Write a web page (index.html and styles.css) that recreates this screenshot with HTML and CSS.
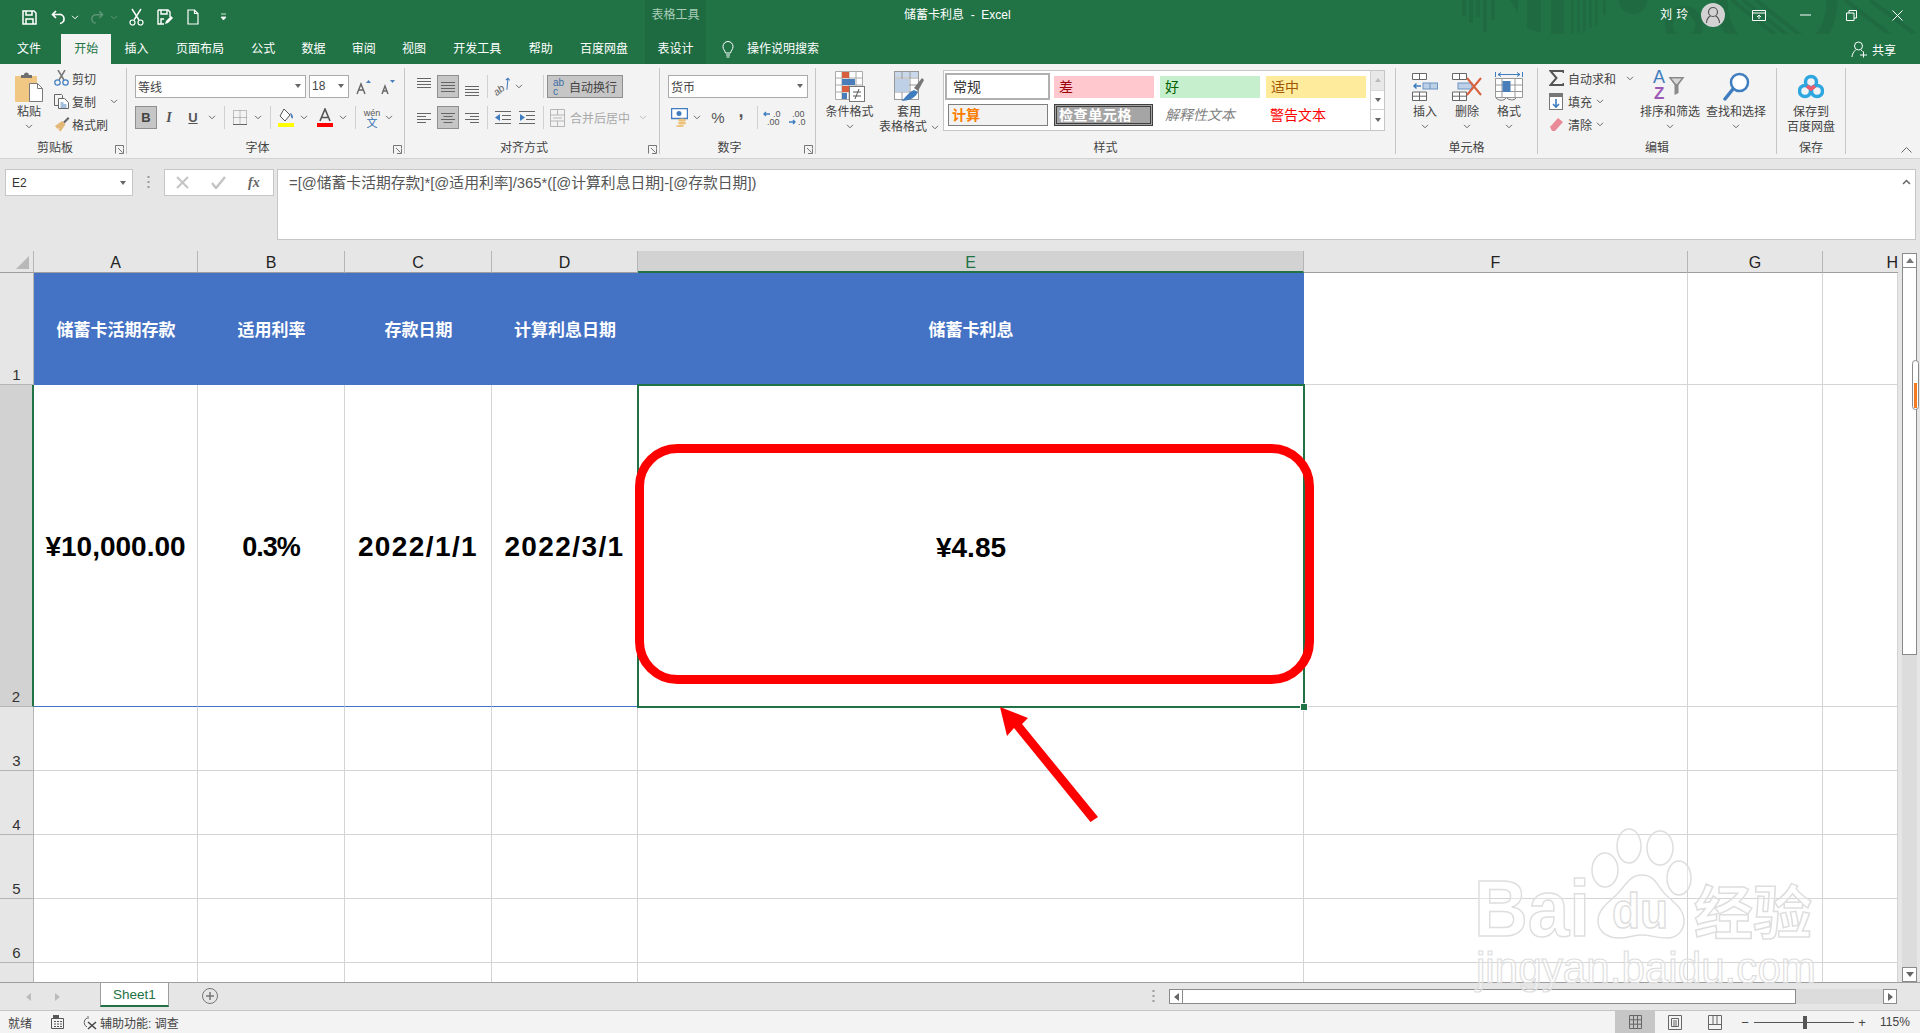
FILE: index.html
```html
<!DOCTYPE html>
<html lang="zh-CN">
<head>
<meta charset="utf-8">
<title>储蓄卡利息 - Excel</title>
<link rel="stylesheet" href="styles.css">
</head>
<body>
<svg class="defs" width="0" height="0" aria-hidden="true">
  <symbol id="chev" viewBox="0 0 8 5"><path d="M1 .8l3 3 3-3" fill="none" stroke="#6a6a6a" stroke-width="1"/></symbol>
  <symbol id="launch" viewBox="0 0 9 9"><path d="M.5 8.500v-8h8v3M3 3l4.500 4.500M4 8.500h4.500V4" fill="none" stroke="#777" stroke-width="1"/></symbol>
  <symbol id="lines" viewBox="0 0 14 10"><path d="M0 .5h14M0 3.500h14M0 6.500h14M0 9.500h14" stroke="#666" stroke-width="1"/></symbol>
</svg>
<div class="app">
  <header class="titlebar">
    <svg class="decor" width="480" height="64" viewBox="0 0 480 64" aria-hidden="true">
      <g fill="#1f6a41">
        <rect x="22" width="4" height="16"/><rect x="29" width="4" height="23"/><rect x="36" width="4" height="17"/><rect x="43" width="4" height="32"/><rect x="51" width="4" height="20"/>
        <path d="M70 0h8v13zM87 0h14v33l-14-5z"/>
        <rect x="111" width="13" height="37"/><rect x="131" width="2.500" height="35"/><rect x="137" width="2.500" height="33"/><rect x="143" width="2.500" height="31"/><rect x="149" width="2.500" height="28"/><rect x="155" width="2.500" height="25"/><rect x="163" width="2.500" height="15"/>
        <circle cx="193" cy="0" r="14"/>
      </g>
      <circle cx="244" cy="25" r="15" fill="none" stroke="#1f6a41" stroke-width="8"/>
      <path d="M282 0a55 61 0 0 0 110 0" fill="none" stroke="#1f6a41" stroke-width="11"/>
      <path d="M292 0l56 45M303 0l53 42M316 0l47 37M405 0l60 46M430 0l45 34" fill="none" stroke="#1f6a41" stroke-width="4"/>
    </svg>
    <div class="qat">
      <span class="cell w24"><svg width="15" height="15" viewBox="0 0 15 15"><path d="M1 1h11l2 2v11H1zM4 1v4h6V1M4 14V9h7v5" fill="none" stroke="#fff" stroke-width="1.500"/></svg></span>
      <span class="cell w16 ml9"><svg width="15" height="15" viewBox="0 0 15 15"><path d="M5 1L1.500 4.500 5 8M2 4.500h6a4.500 4.500 0 0 1 1 9" fill="none" stroke="#fff" stroke-width="1.700"/></svg></span>
      <span class="cell w10 ml4"><svg class="chev light" viewBox="0 0 8 5"><use href="#chev"/></svg></span>
      <span class="cell w14 ml10"><svg width="15" height="15" viewBox="0 0 15 15"><path d="M10 1l3.500 3.500L10 8M13 4.500H7a4.500 4.500 0 0 0-1 9" fill="none" stroke="#5c9476" stroke-width="1.700"/></svg></span>
      <span class="cell w10 ml5"><svg class="chev dim" viewBox="0 0 8 5"><use href="#chev"/></svg></span>
      <span class="cell w20 ml7"><svg width="15" height="18" viewBox="0 0 15 18"><path d="M3 1l7 11M12 1L5 12" stroke="#fff" stroke-width="1.400" fill="none"/><circle cx="3.500" cy="14.500" r="2.500" fill="none" stroke="#fff" stroke-width="1.200"/><circle cx="11.500" cy="14.500" r="2.500" fill="none" stroke="#fff" stroke-width="1.200"/></svg></span>
      <span class="cell w20 ml9"><svg width="16" height="16" viewBox="0 0 16 16"><path d="M1 1h10l2 2v5M1 1v14h6M4 1v4h6V1M4 15v-5h3" fill="none" stroke="#fff" stroke-width="1.400"/><path d="M8 15l1-3 5-5 2 2-5 5z" fill="#fff"/></svg></span>
      <span class="cell w20 ml8"><svg width="12" height="16" viewBox="0 0 12 16"><path d="M1 1h6.500L11 4.500V15H1zM7.500 1v3.500H11" fill="none" stroke="#fff" stroke-width="1.200"/></svg></span>
      <span class="cell w10 ml15"><svg width="7" height="8" viewBox="0 0 7 8"><path d="M1 1h5M1 4h5l-2.500 3z" fill="#fff" stroke="#fff" stroke-width=".8"/></svg></span>
    </div>
    <div class="context-head">表格工具</div>
    <div class="doc-title">储蓄卡利息&nbsp; -&nbsp; Excel</div>
    <div class="title-right">
      <span class="user">刘 玲</span>
      <span class="avatar"><svg width="16" height="18" viewBox="0 0 16 18"><circle cx="8" cy="6" r="4.500" fill="none" stroke="#555" stroke-width="1.200"/><path d="M1.500 17c0-4 2.500-6.500 4-7M14.500 17c0-4-2.500-6.500-4-7" fill="none" stroke="#555" stroke-width="1.200"/></svg></span>
      <span class="win"><svg width="14" height="11" viewBox="0 0 14 11"><path d="M.5.500h13v10H.5zM.5 3h13M7 9V5M5 7l2-2 2 2" fill="none" stroke="#fff"/></svg></span>
      <span class="win"><svg width="11" height="2" viewBox="0 0 11 2"><path d="M0 1h11" stroke="#fff"/></svg></span>
      <span class="win"><svg width="11" height="11" viewBox="0 0 11 11"><path d="M.5 3h7.500v7.500H.5zM3 3V.5h7.500V8H8" fill="none" stroke="#fff"/></svg></span>
      <span class="win"><svg width="11" height="11" viewBox="0 0 11 11"><path d="M.5.500l10 10M10.500.500l-10 10" stroke="#fff" fill="none"/></svg></span>
    </div>
  </header>

  <nav class="tabs">
    <div class="tablist">
      <span class="tab">文件</span><span class="tab active">开始</span><span class="tab">插入</span><span class="tab long">页面布局</span><span class="tab">公式</span><span class="tab">数据</span><span class="tab">审阅</span><span class="tab">视图</span><span class="tab long">开发工具</span><span class="tab">帮助</span><span class="tab long">百度网盘</span>
    </div>
    <div class="context-tab">表设计</div>
    <div class="search"><svg width="12" height="17" viewBox="0 0 12 17"><path d="M3.500 12C3 9.500 1 8.500 1 5.500a5 5 0 0 1 10 0c0 3-2 4-2.500 6.500zM4 14h4M4.500 16h3" fill="none" stroke="#fff"/></svg><span class="search-text">操作说明搜索</span></div>
    <div class="share"><svg width="17" height="17" viewBox="0 0 17 17"><circle cx="7.500" cy="5" r="4" fill="none" stroke="#fff"/><path d="M1 16c0-3 2-5.500 3.500-7M10 9l1.500 1.500M9 14h7M12.500 10.500v6" fill="none" stroke="#fff"/></svg><span>共享</span></div>
  </nav>

  <section class="ribbon">
    <div class="group g-clip">
      <div class="body row">
        <div class="big paste">
          <span class="bigicon"><svg width="28" height="30" viewBox="0 0 28 30"><rect y="4" width="22" height="26" rx="1" fill="#f0c884"/><path d="M6 6V3h3a2.500 2.500 0 0 1 5 0h3v3z" fill="#6f6f6f"/><path d="M14.500 11.500h8l5 5v13h-13z" fill="#fff" stroke="#7a7a7a"/><path d="M22.500 11.500v5h5" fill="none" stroke="#7a7a7a"/></svg></span>
          <span class="biglabel">粘贴</span>
          <span class="bigchev"><svg class="chev" viewBox="0 0 8 5"><use href="#chev"/></svg></span>
        </div>
        <div class="smalls">
          <div class="small"><span class="sicon"><svg width="15" height="16" viewBox="0 0 15 16"><path d="M4 0l6 10M11 0L5 10" stroke="#777" stroke-width="1.500" fill="none"/><circle cx="3.500" cy="12.500" r="2.700" fill="none" stroke="#3f7dbf" stroke-width="1.200"/><circle cx="11.500" cy="12.500" r="2.700" fill="none" stroke="#3f7dbf" stroke-width="1.200"/></svg></span><span>剪切</span></div>
          <div class="small"><span class="sicon"><svg width="15" height="15" viewBox="0 0 15 15"><path d="M.5.500h7l1 1v3M.5.500v11h4" fill="none" stroke="#666"/><path d="M4.500 4.500h6l4 4v6h-10z" fill="#fff" stroke="#666"/><path d="M6.500 9h3M6.500 11h6M6.500 13h6" stroke="#4a7ebb"/></svg></span><span>复制</span><svg class="chev ml14" viewBox="0 0 8 5"><use href="#chev"/></svg></div>
          <div class="small"><span class="sicon"><svg width="16" height="16" viewBox="0 0 16 16"><path d="M9 6l5-5 1.500 1.500-5 5z" fill="#666"/><path d="M1 10l7-5 3.500 3.500-5 7-2-1.500 1-2-2 1z" fill="#e3b877"/></svg></span><span>格式刷</span></div>
        </div>
      </div>
      <div class="label lab-launch">剪贴板</div>
      <svg class="launcher" viewBox="0 0 9 9"><use href="#launch"/></svg>
    </div>

    <div class="group g-font">
      <div class="body stack">
        <div class="line">
          <div class="combo w171"><span>等线</span><i class="caret"></i></div>
          <div class="combo w40 ml3"><span>18</span><i class="caret"></i></div>
          <span class="cell w24 ml2"><svg width="15" height="16" viewBox="0 0 15 16"><path d="M1 15L5 5l4 10M2.500 11h5" fill="none" stroke="#666" stroke-width="1.400"/><path d="M10 4l2.500-3L15 4z" fill="#4a7ebb"/></svg></span>
          <span class="cell w24"><svg width="15" height="16" viewBox="0 0 15 16"><path d="M2 15l3-8 3 8M3 12h4" fill="none" stroke="#666" stroke-width="1.400"/><path d="M10 1l2.500 3L15 1z" fill="#4a7ebb"/></svg></span>
        </div>
        <div class="line">
          <span class="toggle w22 bold">B</span>
          <span class="cell w24 glyph italic">I</span>
          <span class="cell w24 glyph under">U</span>
          <span class="cell w14"><svg class="chev" viewBox="0 0 8 5"><use href="#chev"/></svg></span>
          <i class="vsep ml5"></i>
          <span class="cell w26 ml2"><svg width="14" height="15" viewBox="0 0 14 15"><path d="M.5.500h13v14H.5zM7 .5v14M.5 7.500h13" fill="none" stroke="#888" stroke-dasharray="1 1"/><path d="M0 14.500h14" stroke="#666"/></svg></span>
          <span class="cell w10"><svg class="chev" viewBox="0 0 8 5"><use href="#chev"/></svg></span>
          <i class="vsep ml7"></i>
          <span class="cell w28 ml1"><svg width="16" height="19" viewBox="0 0 16 19"><path d="M6 1l6 6-5 6-5-5z" fill="#fff" stroke="#555"/><path d="M12 5c2 0 3 3 3 4.500s-2 1-2-1" fill="#4a7ebb"/><rect y="15" width="16" height="4" fill="#ff0"/></svg></span>
          <span class="cell w8"><svg class="chev" viewBox="0 0 8 5"><use href="#chev"/></svg></span>
          <span class="cell w26 ml4"><svg width="16" height="19" viewBox="0 0 16 19"><path d="M3 13L8 1l5 12M4.500 9.500h7" fill="none" stroke="#555" stroke-width="1.600"/><rect y="15" width="16" height="4" fill="#f00"/></svg></span>
          <span class="cell w10"><svg class="chev" viewBox="0 0 8 5"><use href="#chev"/></svg></span>
          <i class="vsep ml7"></i>
          <span class="cell w26 ml3 wen"><b>wén</b><b class="wen-zi">文</b></span>
          <span class="cell w8"><svg class="chev" viewBox="0 0 8 5"><use href="#chev"/></svg></span>
        </div>
      </div>
      <div class="label lab-launch">字体</div>
      <svg class="launcher" viewBox="0 0 9 9"><use href="#launch"/></svg>
    </div>

    <div class="group g-align">
      <div class="body stack">
        <div class="line">
          <span class="cell w24"><svg class="alignico top" viewBox="0 0 14 10"><use href="#lines"/></svg></span>
          <span class="toggle w22 mx1"><svg class="alignico" viewBox="0 0 14 10"><use href="#lines"/></svg></span>
          <span class="cell w24"><svg class="alignico btm" viewBox="0 0 14 10"><use href="#lines"/></svg></span>
          <i class="vsep ml3"></i>
          <span class="cell w22 ml4 orient">ab<svg width="12" height="12" viewBox="0 0 12 12"><path d="M1 11l9-9M7 2h3v3" fill="none" stroke="#4a7ebb" stroke-width="1.200"/></svg></span>
          <span class="cell w10"><svg class="chev" viewBox="0 0 8 5"><use href="#chev"/></svg></span>
          <i class="vsep ml19"></i>
          <span class="toggle wrap ml3"><span class="abc">ab<br>c</span><span class="lift">自动换行</span></span>
        </div>
        <div class="line">
          <span class="cell w24"><svg class="alignico" viewBox="0 0 14 10"><path d="M0 .5h14M0 3.500h9M0 6.500h14M0 9.500h9" stroke="#666"/></svg></span>
          <span class="toggle w22 mx1"><svg class="alignico" viewBox="0 0 14 10"><path d="M0 .5h14M2.500 3.500h9M0 6.500h14M2.500 9.500h9" stroke="#666"/></svg></span>
          <span class="cell w24"><svg class="alignico" viewBox="0 0 14 10"><path d="M0 .5h14M5 3.500h9M0 6.500h14M5 9.500h9" stroke="#666"/></svg></span>
          <i class="vsep ml3"></i>
          <span class="cell w24 ml3"><svg width="16" height="13" viewBox="0 0 16 13"><path d="M0 .5h16M7 4.500h9M7 8.500h9M0 12.500h16" stroke="#666"/><path d="M0 6.500l5-3.500v7z" fill="#3f7dbf"/></svg></span>
          <span class="cell w24"><svg width="16" height="13" viewBox="0 0 16 13"><path d="M0 .5h16M7 4.500h9M7 8.500h9M0 12.500h16" stroke="#666"/><path d="M6 6.500L1 3v7z" fill="#3f7dbf"/></svg></span>
          <i class="vsep ml4"></i>
          <span class="cell w16 ml5"><svg width="15" height="18" viewBox="0 0 15 18"><path d="M.5.500h14v17H.5zM.5 6h14M.5 12h14M7.500.5V6M7.500 12v5.500M3 9h9" fill="none" stroke="#b5b5b5"/></svg></span>
          <span class="disabled ml5 w58 lift">合并后居中</span>
          <span class="cell w10 ml10"><svg class="chev dim2" viewBox="0 0 8 5"><use href="#chev"/></svg></span>
        </div>
      </div>
      <div class="label lab-launch">对齐方式</div>
      <svg class="launcher" viewBox="0 0 9 9"><use href="#launch"/></svg>
    </div>

    <div class="group g-num">
      <div class="body stack">
        <div class="line"><div class="combo w140"><span>货币</span><i class="caret"></i></div></div>
        <div class="line">
          <span class="cell w22"><svg width="17" height="19" viewBox="0 0 17 19"><rect x=".5" y=".5" width="16" height="10" fill="#fff" stroke="#3f7dbf" stroke-width="1.500"/><circle cx="8" cy="5.500" r="2.500" fill="#3f7dbf"/><ellipse cx="11" cy="12" rx="4" ry="1.500" fill="#eec27a"/><ellipse cx="11" cy="15" rx="4" ry="1.500" fill="#eec27a"/><ellipse cx="9" cy="18" rx="4" ry="1" fill="#eec27a"/></svg></span>
          <span class="cell w14"><svg class="chev" viewBox="0 0 8 5"><use href="#chev"/></svg></span>
          <span class="cell w28 pct">%</span>
          <span class="cell w18 comma">,</span>
          <i class="vsep ml7"></i>
          <span class="cell w28 dec"><svg width="18" height="16" viewBox="0 0 18 16"><path d="M7 4H1M3 2L1 4l2 2" fill="none" stroke="#3f7dbf" stroke-width="1.300"/><text x="10" y="7" class="dectxt">.0</text><text x="4" y="15" class="dectxt">.00</text></svg></span>
          <span class="cell w22 dec"><svg width="18" height="16" viewBox="0 0 18 16"><text x="4" y="7" class="dectxt">.00</text><path d="M1 12h6M5 10l2 2-2 2" fill="none" stroke="#3f7dbf" stroke-width="1.300"/><text x="10" y="15" class="dectxt">.0</text></svg></span>
        </div>
      </div>
      <div class="label lab-launch">数字</div>
      <svg class="launcher" viewBox="0 0 9 9"><use href="#launch"/></svg>
    </div>

    <div class="group g-style">
      <div class="body row">
        <div class="big w59 ml4">
          <span class="bigicon"><svg width="30" height="31" viewBox="0 0 30 31"><path d="M.5.500h27v28H.5zM7 .5v28M14 .5v28M21 .5v28M.5 7h27M.5 14h27M.5 21h27" fill="#fff" stroke="#aaa"/><rect x="7" y="1" width="7" height="6" fill="#d9603e"/><rect x="7" y="8" width="13" height="6" fill="#4a7ebb"/><rect x="7" y="15" width="10" height="6" fill="#d9603e"/><rect x="7" y="22" width="5" height="6" fill="#4a7ebb"/><rect x="14.500" y="15.500" width="15" height="15" fill="#fff" stroke="#777"/><path d="M18 21h8M18 25h8M24 18l-4 10" stroke="#555" fill="none"/></svg></span>
          <span class="biglabel">条件格式</span>
          <span class="bigchev"><svg class="chev" viewBox="0 0 8 5"><use href="#chev"/></svg></span>
        </div>
        <div class="big w60">
          <span class="bigicon"><svg width="30" height="31" viewBox="0 0 30 31"><rect x=".5" y=".5" width="24" height="28" fill="#fff" stroke="#999"/><rect x="1" y="1" width="23" height="5" fill="#c9d8ea"/><path d="M8 .5v28M16 .5v28M.5 7h24M.5 14h24M.5 21h24" stroke="#999" fill="none"/><rect x="1" y="8" width="14" height="13" fill="#bdd0e6"/><path d="M20 17l8-10 2 2-6 11z" fill="#777"/><path d="M7 30c3-1 5-7 13-11l4 2c-2 5-8 9-17 9z" fill="#3f7dbf"/></svg></span>
          <span class="biglabel">套用</span>
          <span class="biglabel nowrap">表格格式 <svg class="chev" viewBox="0 0 8 5"><use href="#chev"/></svg></span>
        </div>
        <div class="gallery ml4">
          <div class="cstyles">
            <span class="st st-normal">常规</span>
            <span class="st st-bad">差</span>
            <span class="st st-good">好</span>
            <span class="st st-neutral">适中</span>
            <span class="st st-calc">计算</span>
            <span class="st st-check">检查单元格</span>
            <span class="st st-note">解释性文本</span>
            <span class="st st-warn">警告文本</span>
          </div>
          <div class="gal-scroll">
            <span class="gal-btn gal-off"><i class="tri-up small-tri"></i></span>
            <span class="gal-btn"><i class="tri-down small-tri"></i></span>
            <span class="gal-btn gal-more"><i class="tri-down small-tri"></i></span>
          </div>
        </div>
      </div>
      <div class="label">样式</div>
    </div>

    <div class="group g-cells">
      <div class="body row">
        <div class="big w42">
          <span class="bigicon"><svg width="26" height="28" viewBox="0 0 26 28"><path d="M.5.500h14v6H.5zM7.500.5v6M.5 19h14v8.500H.5zM.5 23.200h14M7.500 19v8.500" fill="#fff" stroke="#666"/><rect x="11" y="10" width="14.500" height="6" fill="#bdd0e6" stroke="#6a94c4"/><path d="M18 10v6" stroke="#6a94c4"/><path d="M9 13H2M4.500 10.500L2 13l2.500 2.500" fill="none" stroke="#3f7dbf" stroke-width="1.500"/></svg></span>
          <span class="biglabel">插入</span>
          <span class="bigchev"><svg class="chev" viewBox="0 0 8 5"><use href="#chev"/></svg></span>
        </div>
        <div class="big w42">
          <span class="bigicon"><svg width="30" height="28" viewBox="0 0 30 28"><path d="M.5.500h14v6H.5zM7.500.5v6M.5 19h14v8.500H.5zM.5 23.200h14M7.500 19v8.500" fill="#fff" stroke="#666"/><rect x="6" y="10" width="14" height="6" fill="#bdd0e6" stroke="#6a94c4"/><path d="M15 5l14 17M29 5L15 22" stroke="#d9603e" stroke-width="2"/></svg></span>
          <span class="biglabel">删除</span>
          <span class="bigchev"><svg class="chev" viewBox="0 0 8 5"><use href="#chev"/></svg></span>
        </div>
        <div class="big w42">
          <span class="bigicon"><svg width="28" height="31" viewBox="0 0 28 31"><path d="M.5 1v5M27.500 1v5M3 3.500h22M3 3.500l3-2M3 3.500l3 2M25 3.500l-3-2M25 3.500l-3 2" fill="none" stroke="#3f7dbf"/><path d="M.5 7.500h27v19H.5zM7 7.500v19M20 7.500v19M.5 14h27M.5 20.500h27" fill="#fff" stroke="#999"/><rect x="7.500" y="10" width="8" height="11" fill="#4a7ebb"/><path d="M1 27c3 3 8 3 10 0M12 27c2 2 7 3 9 0" fill="none" stroke="#777"/></svg></span>
          <span class="biglabel">格式</span>
          <span class="bigchev"><svg class="chev" viewBox="0 0 8 5"><use href="#chev"/></svg></span>
        </div>
      </div>
      <div class="label">单元格</div>
    </div>

    <div class="group g-edit">
      <div class="body row">
        <div class="smalls w91">
          <div class="small"><span class="sicon lefted"><svg width="15" height="16" viewBox="0 0 15 16"><path d="M14.500 3V1H1.500l6 7-6 7h13v-2" fill="none" stroke="#555" stroke-width="2"/></svg></span><span>自动求和</span><svg class="chev ml10" viewBox="0 0 8 5"><use href="#chev"/></svg></div>
          <div class="small"><span class="sicon lefted"><svg width="14" height="17" viewBox="0 0 14 17"><rect x=".5" y=".5" width="13" height="16" fill="#fff" stroke="#777"/><rect x="1" y="1" width="12" height="3" fill="#777"/><path d="M7 6v8M4 11l3 3 3-3" fill="none" stroke="#3f7dbf" stroke-width="1.600"/></svg></span><span>填充</span><svg class="chev ml4" viewBox="0 0 8 5"><use href="#chev"/></svg></div>
          <div class="small"><span class="sicon lefted"><svg width="14" height="15" viewBox="0 0 14 15"><path d="M1 10l8-9 5 4-8 9H3z" fill="#e98a98"/></svg></span><span>清除</span><svg class="chev ml4" viewBox="0 0 8 5"><use href="#chev"/></svg></div>
        </div>
        <div class="big w60">
          <span class="bigicon sortico"><b class="az-a">A</b><b class="az-z">Z</b><svg class="funnel" width="17" height="18" viewBox="0 0 16 18"><path d="M0 0h16L10 8v8l-4 2V8z" fill="#8a8a8a"/><path d="M3 1.500h10L8.500 7h-1z" fill="#d8d8d8"/></svg></span>
          <span class="biglabel nowrap">排序和筛选</span>
          <span class="bigchev"><svg class="chev" viewBox="0 0 8 5"><use href="#chev"/></svg></span>
        </div>
        <div class="big w60 ml6">
          <span class="bigicon"><svg width="27" height="29" viewBox="0 0 27 29"><circle cx="16.500" cy="10.500" r="8.500" fill="#fff" stroke="#3f7dbf" stroke-width="2.500"/><path d="M10 17L2 27" stroke="#3f7dbf" stroke-width="3.500" stroke-linecap="round"/></svg></span>
          <span class="biglabel nowrap">查找和选择</span>
          <span class="bigchev"><svg class="chev" viewBox="0 0 8 5"><use href="#chev"/></svg></span>
        </div>
      </div>
      <div class="label">编辑</div>
    </div>

    <div class="group g-save">
      <div class="body">
        <div class="big">
          <span class="bigicon"><svg width="26" height="26" viewBox="0 0 26 26"><circle cx="13" cy="8" r="5.500" fill="none" stroke="#2ea7e0" stroke-width="3.500"/><circle cx="7" cy="17" r="5.500" fill="none" stroke="#2ea7e0" stroke-width="3.500"/><circle cx="19" cy="17" r="5.500" fill="none" stroke="#2ea7e0" stroke-width="3.500"/><path d="M9 12l4 3 4-3" fill="none" stroke="#ef5b6e" stroke-width="3.500"/></svg></span>
          <span class="biglabel nowrap">保存到</span>
          <span class="biglabel nowrap">百度网盘</span>
        </div>
      </div>
      <div class="label">保存</div>
    </div>
    <svg class="collapse" width="11" height="6" viewBox="0 0 11 6"><path d="M.5 5.500l5-5 5 5" fill="none" stroke="#666"/></svg>
  </section>

  <section class="formula">
    <div class="namebox"><span>E2</span><i class="caret"></i></div>
    <svg class="dots" width="3" height="13" viewBox="0 0 3 13"><path d="M1.500 0v2M1.500 5v2M1.500 10v2" stroke="#999" stroke-width="2"/></svg>
    <div class="fxbox">
      <svg width="13" height="13" viewBox="0 0 13 13"><path d="M1 1l11 11M12 1L1 12" stroke="#c4c4c4" stroke-width="2"/></svg>
      <svg width="15" height="13" viewBox="0 0 15 13"><path d="M1 7l4 5L14 1" fill="none" stroke="#c4c4c4" stroke-width="2.500"/></svg>
      <em class="fx">fx</em>
    </div>
    <div class="fxinput"><span>=[@储蓄卡活期存款]*[@适用利率]/365*([@计算利息日期]-[@存款日期])</span><svg class="fxup" width="9" height="6" viewBox="0 0 9 6"><path d="M1 5l3.500-3.500L8 5" fill="none" stroke="#666" stroke-width="1.500"/></svg></div>
  </section>

  <main class="sheetwrap">
    <div class="sheet">
      <div class="ch corner"><i class="corner-tri"></i></div>
      <div class="ch">A</div><div class="ch">B</div><div class="ch">C</div><div class="ch">D</div><div class="ch ch-sel">E</div><div class="ch">F</div><div class="ch">G</div><div class="ch ch-h">H</div>

      <div class="rh">1</div>
      <div class="hcell">储蓄卡活期存款</div><div class="hcell">适用利率</div><div class="hcell">存款日期</div><div class="hcell">计算利息日期</div><div class="hcell">储蓄卡利息</div>
      <div class="c"></div><div class="c"></div><div class="c"></div>

      <div class="rh rh-sel">2</div>
      <div class="vcell">¥10,000.00</div><div class="vcell v-pct">0.3%</div><div class="vcell v-date">2022/1/1</div><div class="vcell v-date">2022/3/1</div>
      <div class="vcell ecell">¥4.85<i class="handle"></i></div>
      <div class="c"></div><div class="c"></div><div class="c"></div>

      <div class="rh">3</div><div class="c"></div><div class="c"></div><div class="c"></div><div class="c"></div><div class="c"></div><div class="c"></div><div class="c"></div><div class="c"></div>
      <div class="rh">4</div><div class="c"></div><div class="c"></div><div class="c"></div><div class="c"></div><div class="c"></div><div class="c"></div><div class="c"></div><div class="c"></div>
      <div class="rh">5</div><div class="c"></div><div class="c"></div><div class="c"></div><div class="c"></div><div class="c"></div><div class="c"></div><div class="c"></div><div class="c"></div>
      <div class="rh">6</div><div class="c"></div><div class="c"></div><div class="c"></div><div class="c"></div><div class="c"></div><div class="c"></div><div class="c"></div><div class="c"></div>
      <div class="rh last"></div><div class="c last"></div><div class="c last"></div><div class="c last"></div><div class="c last"></div><div class="c last"></div><div class="c last"></div><div class="c last"></div><div class="c last"></div>
    </div>
    <div class="vscroll">
      <span class="vbtn"><i class="tri-up"></i></span>
      <span class="vthumb"></span>
      <span class="vtrack"></span>
      <span class="vbtn"><i class="tri-down"></i></span>
      <span class="minimark"><i></i></span>
    </div>
  </main>

  <section class="sheetbar">
    <div class="navarrows"><i class="tri-left"></i><i class="tri-right"></i></div>
    <div class="sheettab">Sheet1</div>
    <svg class="addsheet" width="16" height="16" viewBox="0 0 16 16"><circle cx="8" cy="8" r="7.500" fill="none" stroke="#777"/><path d="M8 4v8M4 8h8" stroke="#777" stroke-width="1.500"/></svg>
    <div class="hscroll">
      <svg class="dots" width="3" height="13" viewBox="0 0 3 13"><path d="M1.500 0v2M1.500 5v2M1.500 10v2" stroke="#999" stroke-width="2"/></svg>
      <span class="hbtn"><i class="tri-left dark"></i></span>
      <span class="hthumb"></span>
      <span class="htrack"></span>
      <span class="hbtn"><i class="tri-right dark"></i></span>
    </div>
  </section>

  <footer class="status">
    <span>就绪</span>
    <svg class="st-macro" width="13" height="14" viewBox="0 0 13 14"><path d="M.5 3.500h12v10H.5zM3 6.500h2M6 6.500h2M9 6.500h2M3 9h2M6 9h2M9 9h2M3 11.500h2M6 11.500h2M9 11.500h2" fill="none" stroke="#555"/><rect x="2" width="6" height="4" fill="#555"/></svg>
    <svg class="st-acc" width="16" height="15" viewBox="0 0 16 15"><path d="M6 1v3M5 3a5 5 0 0 0 0 9" fill="none" stroke="#666"/><path d="M6 7l8 7M14 7l-8 7" stroke="#444" stroke-width="1.500"/></svg>
    <span class="st-acc-text">辅助功能: 调查</span>
    <div class="st-right">
      <span class="view on"><svg width="13" height="14" viewBox="0 0 13 14"><path d="M.5.500h12v13H.5zM4.500.5v13M8.500.5v13M.5 4.800h12M.5 9.200h12" fill="none" stroke="#666"/></svg></span>
      <span class="view"><svg width="14" height="15" viewBox="0 0 14 15"><path d="M.5.500h13v14H.5z" fill="none" stroke="#666"/><path d="M3.500 3.500h7v8h-7zM5 6h4M5 8h4M5 10h4" fill="none" stroke="#666"/></svg></span>
      <span class="view"><svg width="14" height="15" viewBox="0 0 14 15"><path d="M.5.500h13v14H.5zM.5 9.500h13M5 .5v9M9 .5v9" fill="none" stroke="#666"/></svg></span>
      <span class="zbtn ml4">−</span>
      <span class="slider"><i></i></span>
      <span class="zbtn ml2">+</span>
      <span class="zoomtxt">115%</span>
    </div>
  </footer>

  <svg class="overlay" width="1920" height="1033" viewBox="0 0 1920 1033" aria-hidden="true">
    <rect x="639.500" y="448.500" width="670" height="231" rx="38" ry="38" fill="none" stroke="#ff0000" stroke-width="9"/>
    <path d="M1000 707l28 11-6 6 76 93-7.500 5-76.500-94-7 8z" fill="#ff0000"/>
    <g class="wm">
      <ellipse cx="1605" cy="870" rx="13" ry="17"/>
      <ellipse cx="1629" cy="846" rx="12" ry="17"/>
      <ellipse cx="1660" cy="848" rx="13" ry="17"/>
      <ellipse cx="1679" cy="878" rx="12" ry="17"/>
      <path d="M1642 875c-14 0-17 13-28 22-9 8-16 14-16 24 0 11 10 17 21 17 9 0 15-3 23-3s15 3 25 3c10 0 17-7 17-17 0-11-8-17-17-25-10-9-11-21-25-21z"/>
      <text x="1474" y="936" class="wm-bai" textLength="116" lengthAdjust="spacingAndGlyphs">Bai</text>
      <text x="1612" y="928" class="wm-du" textLength="56" lengthAdjust="spacingAndGlyphs">du</text>
      <text x="1694" y="934" class="wm-cn" textLength="118" lengthAdjust="spacingAndGlyphs">经验</text>
      <text x="1476" y="983" class="wm-url" textLength="340" lengthAdjust="spacingAndGlyphs">jingyan.baidu.com</text>
    </g>
  </svg>
</div>
</body>
</html>
```
FILE: styles.css
```css
* { box-sizing: border-box; }
html, body { margin: 0; padding: 0; height: 100%; overflow: hidden; }
body {
  font-family: "Liberation Sans", "Noto Sans CJK SC", sans-serif;
  font-size: 12px;
  color: #444;
  background: #fff;
}
i { font-style: normal; display: block; }
.defs { position: absolute; }
.app { position: relative; width: 1920px; height: 1033px; display: flex; flex-direction: column; overflow: hidden; }

/* utility widths and margins */
.w8 { width: 8px; } .w10 { width: 10px; } .w14 { width: 14px; } .w16 { width: 16px; } .w18 { width: 18px; }
.w20 { width: 20px; } .w22 { width: 22px; } .w24 { width: 24px; } .w26 { width: 26px; } .w28 { width: 28px; }
.w40 { width: 40px; } .w42 { width: 42px; } .w58 { width: 58px; } .w59 { width: 59px; } .w60 { width: 60px; }
.w91 { width: 91px; } .w140 { width: 140px; } .w171 { width: 171px; }
.ml1 { margin-left: 1px; } .ml2 { margin-left: 2px; } .ml3 { margin-left: 3px; } .ml4 { margin-left: 4px; }
.ml5 { margin-left: 5px; } .ml6 { margin-left: 6px; } .ml7 { margin-left: 7px; } .ml8 { margin-left: 8px; }
.ml9 { margin-left: 9px; } .ml10 { margin-left: 10px; } .ml14 { margin-left: 14px; } .ml15 { margin-left: 15px; }
.ml19 { margin-left: 19px; } .mx1 { margin: 0 1px; }

.cell { display: flex; align-items: center; justify-content: center; height: 100%; flex: none; }
.chev { width: 8px; height: 5px; flex: none; }
.chev.light { filter: brightness(3.500); }
.chev.dim { opacity: .35; filter: brightness(2); }
.chev.dim2 { opacity: .4; }
.lift { padding-bottom: 1px; }

/* title bar */
.titlebar { position: relative; height: 34px; background: #217346; color: #fff; display: flex; flex: none; }
.decor { position: absolute; left: 1440px; top: 0; }
.qat { position: relative; width: 645px; padding-left: 17px; display: flex; align-items: center; height: 34px; }
.context-head { position: relative; width: 61px; background: #1e6b41; color: #a9cdb8; text-align: center; line-height: 31px; }
.doc-title { position: relative; margin-left: 198px; width: 130px; line-height: 30px; white-space: nowrap; color: #fff; }
.title-right { position: relative; margin-left: auto; display: flex; align-items: flex-start; height: 34px; }
.user { width: 30px; margin-left: -2px; line-height: 30px; white-space: nowrap; letter-spacing: .5px; }
.avatar { width: 24px; height: 24px; margin: 3px 0 0 11px; border-radius: 50%; background: #d2d2d2; display: flex; align-items: center; justify-content: center; }
.win { width: 46px; height: 30px; display: flex; align-items: center; justify-content: center; }
.avatar + .win { margin-left: 11px; }

/* tabs */
.tabs { position: relative; height: 30px; background: #217346; color: #fff; display: flex; flex: none; }
.tablist { width: 645px; padding-left: 4px; display: flex; gap: .3px; }
.tab { width: 50px; line-height: 30px; text-align: center; flex: none; }
.tab.long { width: 76px; }
.tab.active { width: 50px; margin-left: 7px; background: #f3f3f3; color: #217346; }
.context-tab { width: 61px; background: #1e6b41; text-align: center; line-height: 30px; }
.search { margin-left: 16px; display: flex; align-items: center; height: 30px; }
.search-text { margin-left: 13px; line-height: 30px; height: 30px; display: block; }
.share { margin-left: auto; padding-right: 24px; display: flex; align-items: center; gap: 4px; }

/* ribbon */
.ribbon { position: relative; height: 95px; background: #f3f3f3; border-bottom: 1px solid #d2d2d2; display: flex; flex: none; }
.group { position: relative; margin-top: 4px; height: 86px; border-right: 1px solid #c6c6c6; display: flex; flex-direction: column; flex: none; }
.g-clip { width: 127px; }
.g-font { width: 278px; }
.g-align { width: 255px; }
.g-num { width: 156px; }
.g-style { width: 580px; }
.g-cells { width: 142px; }
.g-edit { width: 239px; }
.g-save { width: 69px; }
.body { height: 71px; flex: none; }
.g-font .body, .g-num .body, .g-cells .body { padding-left: 8px; }
.g-align .body { padding-left: 7px; }
.g-edit .body { padding-left: 11px; }
.body.row { display: flex; }
.body.stack { padding-top: 7px; display: flex; flex-direction: column; gap: 8px; }
.line { display: flex; height: 23px; align-items: center; }
.label { height: 15px; line-height: 15px; margin-top: 2px; text-align: center; white-space: nowrap; }
.lab-launch { padding-right: 16px; }
.launcher { position: absolute; right: 2px; bottom: 0; width: 9px; height: 9px; }
.collapse { position: absolute; right: 8px; bottom: 5px; }

.big { display: flex; flex-direction: column; align-items: center; flex: none; }
.paste { width: 58px; }
.bigicon { height: 37px; display: flex; align-items: center; justify-content: center; flex: none; }
.biglabel { line-height: 15px; height: 15px; white-space: nowrap; text-align: center; }
.nowrap { display: flex; align-items: center; gap: 4px; }
.bigchev { height: 13px; display: flex; align-items: center; }

.smalls { display: flex; flex-direction: column; gap: 1px; margin-top: -1px; flex: none; }
.small { height: 22px; display: flex; align-items: center; white-space: nowrap; }
.sicon { width: 18px; display: flex; justify-content: flex-start; flex: none; }
.sicon.lefted { width: 19px; }
.paste + .smalls { margin-left: -4px; }

.combo { height: 23px; background: #fff; border: 1px solid #ababab; display: flex; align-items: center; justify-content: space-between; padding: 0 4px 1px 2px; flex: none; }
.caret { width: 0; height: 0; border-left: 3.500px solid transparent; border-right: 3.500px solid transparent; border-top: 4px solid #666; }
.toggle { height: 23px; display: flex; align-items: center; justify-content: center; background: #c6c6c6; border: 1px solid #8f8f8f; flex: none; }
.bold { font-weight: 700; font-size: 13px; color: #444; }
.glyph { font-size: 14px; color: #555; font-family: "Liberation Serif", serif; font-weight: 700; }
.italic { font-style: italic; }
.under { text-decoration: underline; font-family: "Liberation Sans", sans-serif; font-size: 13px; }
.vsep { width: 1px; height: 23px; background: #d0d0d0; flex: none; }
.wen { flex-direction: column; font-size: 9px; line-height: 10px; color: #555; }
.wen b { font-weight: 400; }
.wen-zi { color: #2f6fb0; font-size: 11px; }
.alignico { width: 14px; height: 10px; }
.alignico.top { margin-bottom: 8px; }
.alignico.btm { margin-top: 8px; }
.orient { color: #555; font-size: 10px; transform: rotate(-40deg); font-style: italic; }
.wrap { width: 76px; gap: 5px; }
.abc { font-size: 10px; line-height: 9px; color: #3f6ea5; }
.disabled { color: #a9a9a9; white-space: nowrap; flex: none; }
.pct { font-size: 15px; color: #555; }
.comma { font-size: 18px; font-weight: 700; color: #555; padding-bottom: 12px; }
.dectxt { font-size: 9px; fill: #555; }

.gallery { width: 442px; height: 61px; margin-top: 2px; background: #fff; border: 1px solid #c6c6c6; display: flex; flex: none; }
.cstyles { width: 426px; padding: 2px 0 0 1px; display: grid; grid-template-columns: 109px 106px 106px 100px; grid-template-rows: 27px 22px; row-gap: 4px; align-items: center; }
.st { display: flex; align-items: center; height: 22px; width: 100px; padding: 0 0 2px 5px; font-size: 14px; white-space: nowrap; }
.st-normal { height: 27px; width: 105px; padding-left: 6px; background: #fff; border: 2px solid #b0b0b0; color: #333; }
.st-bad { background: #ffc7ce; color: #9c0006; }
.st-good { background: #c6efce; color: #006100; }
.st-neutral { background: #ffeb9c; color: #9c5700; }
.st-calc { margin-left: 3px; background: #f2f2f2; border: 1px solid #7f7f7f; color: #fa7d00; font-weight: 700; padding-left: 3px; }
.st-check { width: 99px; background: #a5a5a5; border: 3px double #3f3f3f; color: #fff; font-weight: 700; padding-left: 2px; letter-spacing: .6px; }
.st-note { color: #7f7f7f; font-style: italic; }
.st-warn { color: #ff0000; padding-left: 4px; }
.gal-scroll { width: 14px; border-left: 1px solid #d0d0d0; display: flex; flex-direction: column; flex: none; }
.gal-btn { height: 20px; border-bottom: 1px solid #d0d0d0; display: flex; align-items: center; justify-content: center; }
.gal-off { background: #e3e3e3; opacity: .8; }
.gal-more { border-bottom: 0; }
.tri-up { width: 0; height: 0; border-left: 4px solid transparent; border-right: 4px solid transparent; border-bottom: 5px solid #777; }
.tri-down { width: 0; height: 0; border-left: 4px solid transparent; border-right: 4px solid transparent; border-top: 5px solid #666; }
.small-tri { border-left-width: 3px; border-right-width: 3px; border-top-width: 4px; border-bottom-width: 4px; }
.tri-up.small-tri { border-top-width: 0; border-bottom-color: #aaa; }
.tri-down.small-tri { border-bottom-width: 0; }
.tri-left { width: 0; height: 0; border-top: 4px solid transparent; border-bottom: 4px solid transparent; border-right: 5px solid #bbb; }
.tri-right { width: 0; height: 0; border-top: 4px solid transparent; border-bottom: 4px solid transparent; border-left: 5px solid #bbb; }
.tri-left.dark { border-right-color: #666; }
.tri-right.dark { border-left-color: #666; }

.sortico { position: relative; width: 40px; }
.az-a { position: absolute; left: 3px; top: 1px; font-size: 18px; line-height: 17px; font-weight: 400; color: #3f7dbf; }
.az-z { position: absolute; left: 4px; top: 17px; font-size: 17px; line-height: 17px; color: #9b59b6; }
.funnel { position: absolute; left: 18px; top: 9px; }

/* formula bar */
.formula { height: 92px; background: #e6e6e6; padding-top: 10px; display: flex; align-items: flex-start; flex: none; }
.namebox { margin-left: 5px; width: 128px; height: 27px; background: #fff; border: 1px solid #c6c6c6; display: flex; align-items: center; justify-content: space-between; padding: 0 6px 0 6px; font-size: 12px; color: #333; }
.formula .dots { margin: 7px 0 0 14px; }
.fxbox { margin-left: 14px; width: 110px; height: 27px; background: #fff; border: 1px solid #c6c6c6; display: flex; align-items: center; gap: 22px; padding-left: 11px; }
.fx { font-family: "Liberation Serif", serif; font-weight: 700; font-size: 14px; color: #666; }
.fxinput { position: relative; margin-left: 3px; width: 1639px; height: 71px; background: #fff; border: 1px solid #c6c6c6; padding: 4px 0 0 11px; font-size: 14.800px; line-height: 19px; color: #555; white-space: nowrap; }
.fxup { position: absolute; right: 4px; top: 9px; }

/* sheet */
.sheetwrap { display: flex; height: 731px; background: #e6e6e6; flex: none; }
.sheet {
  width: 1898px; height: 731px; background: #fff;
  display: grid;
  grid-template-columns: 34px 164px 147px 147px 146px 666px 384px 135px 75px;
  grid-template-rows: 22px 112px 322px 64px 64px 64px 64px 19px;
}
.ch { background: #e6e6e6; border-right: 1px solid #b5b5b5; border-bottom: 1px solid #9e9e9e; text-align: center; font-size: 16px; line-height: 23px; color: #222; }
.corner { position: relative; }
.corner-tri { position: absolute; right: 4px; bottom: 3px; width: 0; height: 0; border-left: 13px solid transparent; border-bottom: 13px solid #b8b8b8; }
.ch-sel { background: #d2d2d2; color: #217346; border-bottom: 2px solid #217346; }
.ch-h { text-align: right; padding-right: 0; border-right: 0; }
.rh { background: #e6e6e6; border-right: 1px solid #b5b5b5; border-bottom: 1px solid #b5b5b5; display: flex; align-items: flex-end; justify-content: center; font-size: 15px; line-height: 18px; color: #333; }
.rh-sel { background: #d2d2d2; border-right: 2px solid #217346; }
.rh.last { border-bottom: 0; }
.c { border-right: 1px solid #d4d4d4; border-bottom: 1px solid #d4d4d4; }
.c.last { border-bottom: 0; }
.hcell { background: #4472c4; color: #fff; font-weight: 700; font-size: 17px; padding-bottom: 2px; display: flex; align-items: center; justify-content: center; white-space: nowrap; }
.vcell { border-right: 1px solid #d4d4d4; border-bottom: 1px solid #4472c4; color: #000; font-weight: 700; font-size: 28px; padding-top: 3px; display: flex; align-items: center; justify-content: center; white-space: nowrap; }
.v-pct { font-size: 27px; letter-spacing: -1px; }
.v-date { letter-spacing: 1.400px; }
.ecell { position: relative; outline: 2px solid #217346; outline-offset: -1px; border: 0; }
.handle { position: absolute; right: -3px; bottom: -3px; width: 6px; height: 6px; background: #217346; border: 1px solid #fff; box-sizing: content-box; margin: -1px; }

.vscroll { position: relative; width: 22px; padding: 2px 3px 0 4px; display: flex; flex-direction: column; flex: none; }
.vbtn { height: 15px; background: #fff; border: 1px solid #8a8a8a; display: flex; align-items: center; justify-content: center; flex: none; }
.vthumb { height: 387px; background: #fff; border-left: 1px solid #8a8a8a; border-right: 1px solid #8a8a8a; border-bottom: 1px solid #8a8a8a; flex: none; }
.vtrack { flex: 1; background: #dcdcdc; }
.minimark { position: absolute; left: 14px; top: 109px; width: 7px; height: 50px; border: 1.500px solid #8a8a8a; border-radius: 4px; background: #fff; }
.minimark i { position: absolute; left: 1px; bottom: 1px; width: 3px; height: 25px; background: #f47a20; }

/* sheet tabs */
.sheetbar { height: 28px; background: #e6e6e6; border-top: 1px solid #9e9e9e; display: flex; align-items: flex-start; flex: none; }
.navarrows { width: 100px; height: 27px; padding-left: 26px; display: flex; align-items: center; gap: 24px; }
.sheettab { width: 69px; height: 24px; background: #fff; border: 1px solid #9e9e9e; border-top: 0; border-bottom: 2px solid #217346; color: #217346; text-align: center; line-height: 23px; font-size: 13.500px; }
.addsheet { margin: 5px 0 0 33px; }
.hscroll { margin-left: 934px; display: flex; align-items: center; height: 27px; }
.hscroll .dots { margin-right: 14px; }
.hbtn { width: 14px; height: 15px; border: 1px solid #8a8a8a; display: flex; align-items: center; justify-content: center; background: #fff; }
.hthumb { width: 613px; height: 15px; background: #fff; border: 1px solid #8a8a8a; border-left: 0; }
.htrack { width: 87px; height: 15px; background: #dcdcdc; }

/* status bar */
.status { height: 23px; background: #f3f3f3; border-top: 1px solid #c6c6c6; display: flex; align-items: center; padding-left: 8px; flex: 1; font-size: 12px; color: #444; }
.st-macro { margin-left: 19px; }
.st-acc { margin-left: 18px; }
.st-acc-text { margin-left: 2px; }
.st-right { margin-left: auto; display: flex; align-items: center; height: 100%; }
.view { width: 40px; height: 100%; display: flex; align-items: center; justify-content: center; }
.view.on { background: #c6c6c6; }
.zbtn { width: 12px; text-align: center; font-size: 13px; }
.slider { position: relative; display: block; width: 100px; height: 1px; background: #555; margin-left: 3px; }
.slider i { position: absolute; left: 49px; top: -6px; width: 4px; height: 13px; background: #555; }
.zoomtxt { width: 33px; margin: 0 7px 0 12px; white-space: nowrap; }

/* annotations over the sheet */
.overlay { position: absolute; left: 0; top: 0; pointer-events: none; }
.wm { fill: rgba(255,255,255,.35); stroke: #dedede; stroke-width: 1.500; }
.wm text { font-family: "Liberation Sans", "Noto Sans CJK SC", sans-serif; font-weight: 700; }
.wm-bai { font-size: 80px; }
.wm-du { font-size: 50px; }
.wm-cn { font-size: 58px; }
.wm-url { font-size: 44px; font-weight: 400 !important; stroke-width: 1.200; }
```
